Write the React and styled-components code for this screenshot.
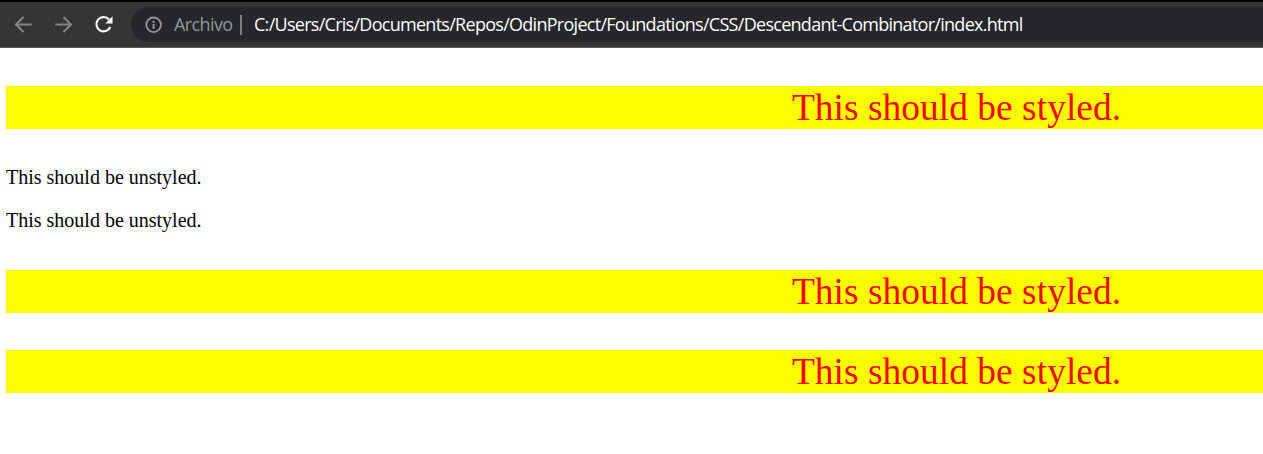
import React from 'react';
import styled, { createGlobalStyle } from 'styled-components';

const GlobalStyle = createGlobalStyle`
  html, body { margin: 0; background: #fff; }
  body { overflow: hidden; }
`;

const Window = styled.div`
  width: 100%;
  height: 454px;
  overflow: hidden;
  background: #fff;
`;

const Toolbar = styled.header`
  display: flex;
  align-items: center;
  box-sizing: border-box;
  height: 48px;
  padding-left: 11px;
  border-top: 2px solid #000;
  border-bottom: 1px solid #5c5a5c;
  background: #353535;
`;

const NavButton = styled.button`
  display: flex;
  flex: none;
  width: 24px;
  height: 24px;
  margin: 0 16px 1px 0;
  padding: 0;
  border: 0;
  background: none;
  color: ${({ $active }) => ($active ? '#fff' : '#868686')};
`;

const AddressBar = styled.div`
  display: flex;
  flex: 1;
  align-items: center;
  height: 35px;
  padding-left: 14px;
  border-radius: 18px 0 0 18px;
  background: #26272b;
  font-family: 'Open Sans', 'Noto Sans', sans-serif;
  font-size: 18px;
  line-height: 24px;
  white-space: nowrap;
`;

const Scheme = styled.span`
  width: 58px;
  margin-left: 11px;
  padding-bottom: 2px;
  color: #91969b;
  letter-spacing: -0.6px;
`;

const Divider = styled.span`
  width: 2px;
  height: 20px;
  margin: 0 12px 0 8px;
  background: #7c7f82;
`;

const Path = styled.span`
  padding-bottom: 2px;
  color: #fff;
  letter-spacing: -0.72px;
`;

const Page = styled.main`
  display: flow-root;
  width: 1901px;
  margin-left: 6px;
  color: #000;
  font: 20px/23px 'Liberation Serif', 'Times New Roman', serif;
`;

const Plain = styled.p`
  margin: 20px 0;
`;

const Highlighted = styled.p`
  margin: 37.5px 0;
  background: #ff0;
  color: #f00;
  font-size: 37.5px;
  line-height: 43px;
  text-align: center;
`;

const Back = () => (
  <svg width="24" height="24" fill="none" stroke="currentColor" strokeWidth="2">
    <path d="M20.7 12.5H5.5M12.5 5L5 12.5l7.5 7.5" />
  </svg>
);

const Forward = () => (
  <svg width="24" height="24" fill="none" stroke="currentColor" strokeWidth="2">
    <path d="M4.3 12.5h15.5M12.5 5l7.5 7.5-7.5 7.5" />
  </svg>
);

const Reload = () => (
  <svg width="24" height="24" fill="none" stroke="currentColor" strokeWidth="2.2">
    <path d="M18 7.4A7.2 7.2 0 1 0 19.3 15" />
    <path d="M21.5 4.2v7.2h-7.2z" fill="currentColor" stroke="none" />
  </svg>
);

const Info = () => (
  <svg width="18" height="18" fill="none" stroke="#91969b" strokeWidth="1.8">
    <circle cx="8.6" cy="8.8" r="7.3" />
    <path d="M8.6 8v5M8.6 4.8v1.9" strokeWidth="2" />
  </svg>
);

export default function App() {
  return (
    <Window>
      <GlobalStyle />
      <Toolbar>
        <NavButton aria-label="Atrás"><Back /></NavButton>
        <NavButton aria-label="Adelante"><Forward /></NavButton>
        <NavButton aria-label="Recargar" $active><Reload /></NavButton>
        <AddressBar>
          <Info />
          <Scheme>Archivo</Scheme>
          <Divider />
          <Path>C:/Users/Cris/Documents/Repos/OdinProject/Foundations/CSS/Descendant-Combinator/index.html</Path>
        </AddressBar>
      </Toolbar>
      <Page>
        <Highlighted>This should be styled.</Highlighted>
        <Plain>This should be unstyled.</Plain>
        <Plain>This should be unstyled.</Plain>
        <Highlighted>This should be styled.</Highlighted>
        <Highlighted>This should be styled.</Highlighted>
      </Page>
    </Window>
  );
}
